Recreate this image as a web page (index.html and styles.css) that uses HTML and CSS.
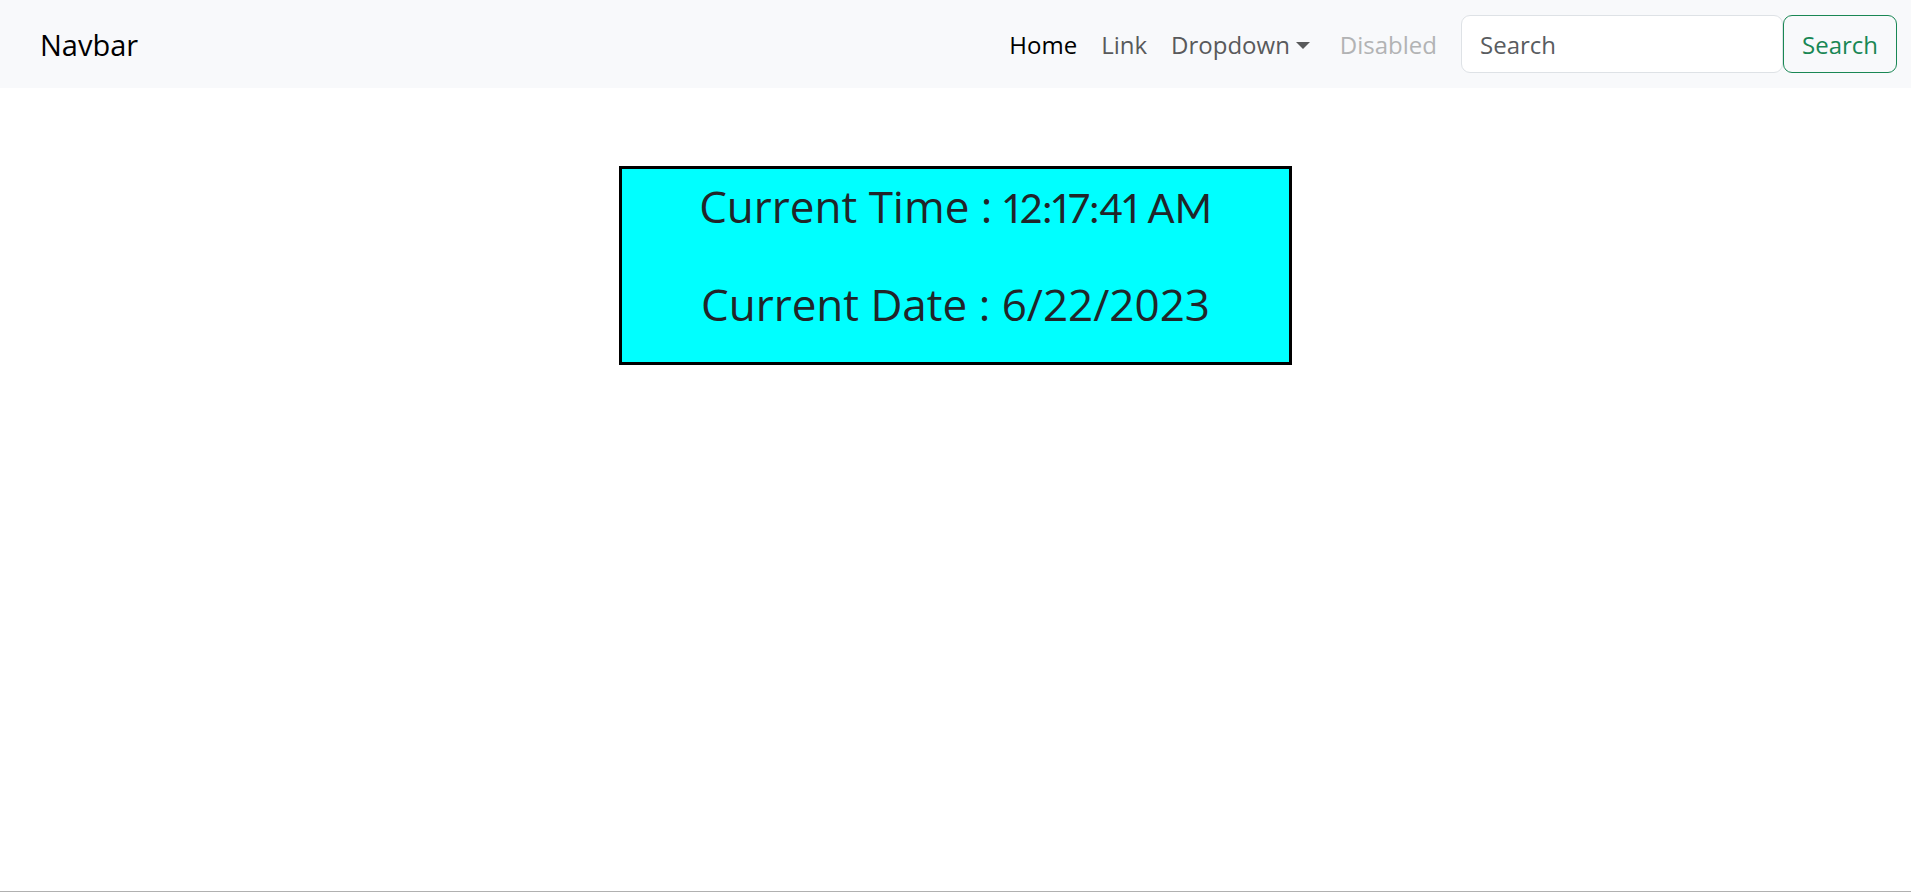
FILE: index.html
```html
<!DOCTYPE html>
<html lang="en">
<head>
<meta charset="utf-8">
<meta name="viewport" content="width=device-width, initial-scale=1">
<title>Current Time</title>
<link rel="stylesheet" href="styles.css">
</head>
<body>
<nav class="navbar">
  <a class="navbar-brand" href="#">Navbar</a>
  <ul class="nav-list">
    <li><a class="nav-link active" href="#" aria-current="page">Home</a></li>
    <li><a class="nav-link" href="#">Link</a></li>
    <li><a class="nav-link dropdown-toggle" href="#" role="button" aria-expanded="false">Dropdown</a></li>
    <li><a class="nav-link disabled" href="#" aria-disabled="true">Disabled</a></li>
  </ul>
  <form class="search-form" role="search">
    <input class="search-input" type="search" placeholder="Search" aria-label="Search">
    <button class="search-button" type="submit">Search</button>
  </form>
</nav>
<main class="clock">
  <p class="clock-line">Current Time : <time class="clock-time">12:17:41 AM</time></p>
  <p class="clock-line">Current Date : <time datetime="2023-06-22">6/22/2023</time></p>
</main>
</body>
</html>
```
FILE: styles.css
```css
* {
  box-sizing: border-box;
}

body {
  display: flex;
  flex-direction: column;
  min-height: 100vh;
  margin: 0;
  border-bottom: 1px solid #b0b0b0;
  background: #fff;
  color: #212529;
  font-family: "Segoe UI", "Open Sans", "Noto Sans", sans-serif;
  font-size: 24px;
  line-height: 36px;
}

.navbar {
  display: flex;
  flex-wrap: wrap;
  align-items: center;
  padding: 15px 14px 15px 40px;
  background: #f8f9fb;
}

.navbar-brand {
  margin-right: auto;
  padding-top: 2px;
  color: #000;
  font-size: 29px;
  text-decoration: none;
}

.nav-list {
  display: flex;
  margin: 0 12px 0 0;
  padding: 0;
  list-style: none;
}

.nav-link {
  display: block;
  padding: 10px 12px 8px;
  color: #595a5b;
  text-decoration: none;
}

.nav-link.active {
  color: #000;
}

.nav-link.disabled {
  color: #b2b3b4;
}

.dropdown-toggle {
  display: flex;
  align-items: center;
  gap: 6px;
  margin-right: 6px;
}

.dropdown-toggle::after {
  border: 7px solid transparent;
  border-top-color: currentColor;
  border-bottom: 0;
  content: "";
}

.search-form {
  display: flex;
}

.search-input,
.search-button {
  height: 58px;
  padding: 0 18px;
  border: 1px solid #dee2e6;
  border-radius: 9px;
  font: inherit;
}

.search-input {
  width: 322px;
  background: #fff;
  color: #212529;
}

.search-input::placeholder {
  color: #595c5f;
  opacity: 1;
}

.search-button {
  padding-top: 2px;
  border-color: #198754;
  background: transparent;
  color: #198754;
}

.clock {
  align-self: center;
  margin-top: 78px;
  padding: 2px 77px 23px;
  border: 3px solid #000;
  background: aqua;
  font-size: 44px;
  line-height: 70px;
  text-align: center;
}

.clock-line {
  margin: 0 0 28px;
}

.clock-line:last-child {
  margin-bottom: 0;
}

.clock-time {
  font-family: Lato, sans-serif;
  font-size: 40px;
  font-variant-numeric: proportional-nums;
  line-height: 1;
}
```
